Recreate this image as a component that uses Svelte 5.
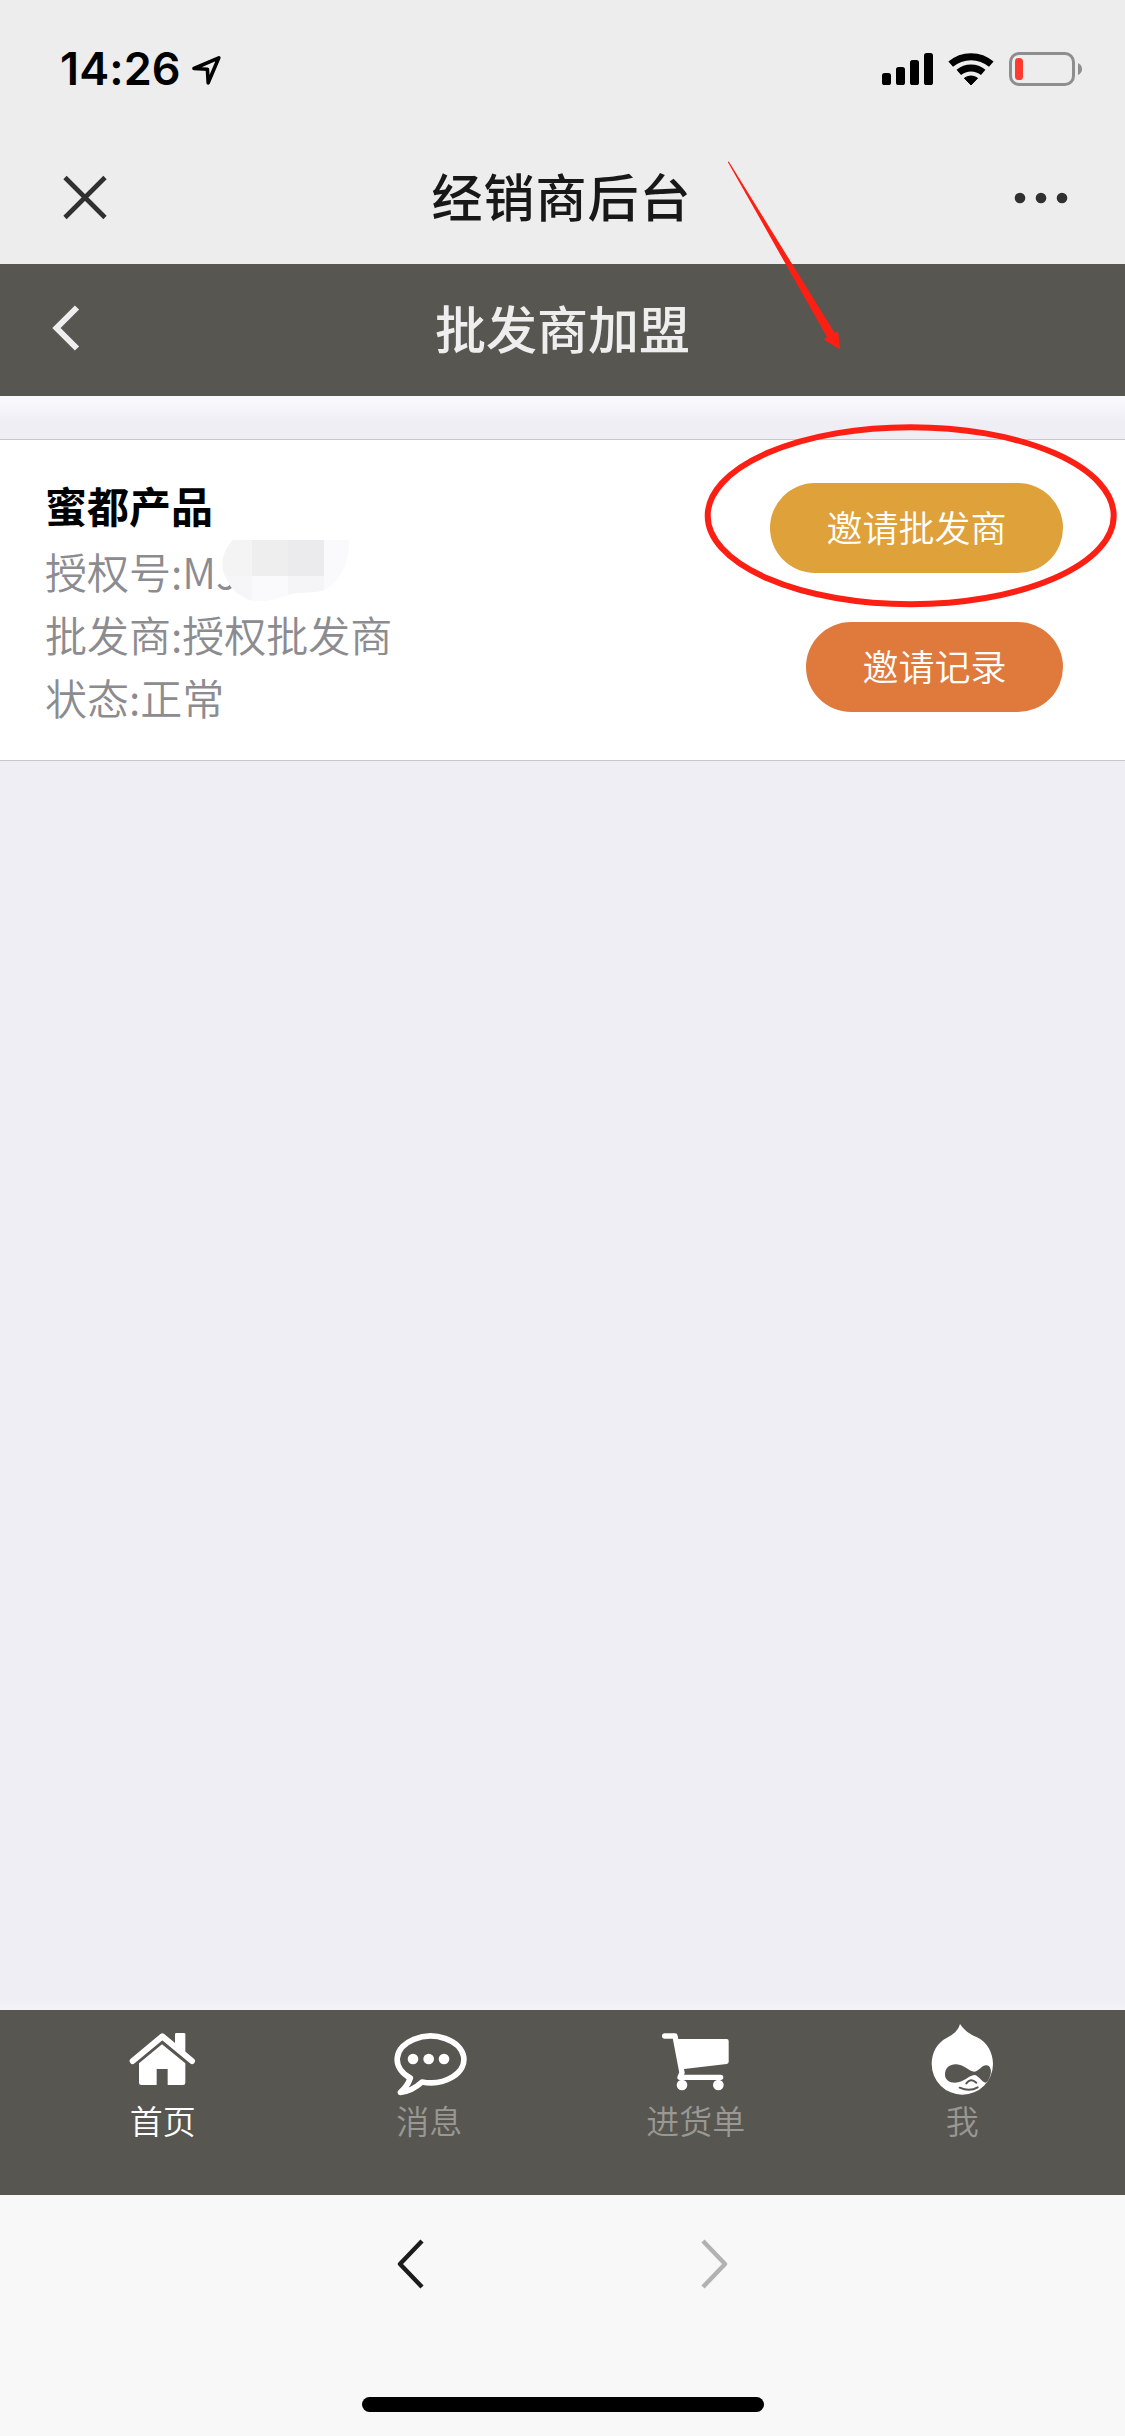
<script>
  let active = "home";

  const product = {
    name: "蜜都产品",
    code: "MJ",
    level: "授权批发商",
    status: "正常"
  };

  const tabs = [
    { id: "home", label: "首页" },
    { id: "message", label: "消息" },
    { id: "cart", label: "进货单" },
    { id: "me", label: "我" }
  ];
</script>

<div class="phone">
  <div class="status">
    <div class="clock">
      <span>14:26</span>
      <svg width="34" height="34" viewBox="0 0 34 34">
        <path d="M4 16.5L28.8 5.8L18.2 30.8L17.4 17.2Z" fill="none" stroke="#000" stroke-width="3.6" stroke-linejoin="round" />
      </svg>
    </div>
    <svg width="204" height="40" viewBox="880 49 204 40">
      <rect x="882" y="73" width="9" height="12" rx="2.6" />
      <rect x="896" y="67" width="9" height="18" rx="2.6" />
      <rect x="910" y="60" width="9" height="25" rx="2.6" />
      <rect x="924" y="53" width="9" height="32" rx="2.6" />
      <g fill="none" stroke="#000" stroke-width="7">
        <path d="M950.7 64.2A31 31 0 0 1 991.3 64.2" />
        <path d="M958.8 72.4A19 19 0 0 1 983.2 72.4" />
      </g>
      <path d="M964.4 78.2A11 11 0 0 1 977.6 78.2L971 85Z" stroke="#000" stroke-linejoin="round" />
      <rect x="1010.5" y="53.5" width="63" height="31" rx="8.5" fill="none" stroke="#8e8e8e" stroke-width="3" />
      <rect x="1015" y="58" width="8" height="22" rx="3.6" fill="#ff3b30" />
      <path d="M1078 63Q1082 65 1082 69T1078 75Z" fill="#8e8e8e" />
    </svg>
  </div>

  <header class="wechat">
    <svg width="48" height="48" viewBox="0 0 48 48">
      <path d="M4 3.5L44 43.5M44 3.5L4 43.5" stroke="#303030" stroke-width="4.6" />
    </svg>
    <h1>经销商后台</h1>
    <svg width="54" height="12" viewBox="0 0 54 12" fill="#303030">
      <circle cx="6" cy="6" r="5.3" />
      <circle cx="27" cy="6" r="5.3" />
      <circle cx="48" cy="6" r="5.3" />
    </svg>
  </header>

  <header class="bar">
    <svg width="28" height="48" viewBox="0 0 28 48">
      <path d="M25 3.5L4.5 24L25 44.5" fill="none" stroke="#eee" stroke-width="6" />
    </svg>
    <h2>批发商加盟</h2>
  </header>

  <main>
    <section class="card">
      <div class="info">
        <h3>{product.name}</h3>
        <p class="code">
          授权号:{product.code}
          <svg class="mosaic" width="130" height="64" viewBox="222 540 130 64">
            <clipPath id="smudge">
              <path d="M233 540H349C350 558 343 580 325 590C311 594 300 591 288 595C275 600 262 603 249 600C236 594 231 588 227 580C219 567 222 551 233 540Z" />
            </clipPath>
            <g clip-path="url(#smudge)">
              <rect x="216" y="540" width="136" height="64" fill="#fafafc" />
              <rect x="216" y="540" width="36" height="36" fill="#f4f4f5" />
              <rect x="252" y="540" width="36" height="36" fill="#eeeeef" />
              <rect x="288" y="540" width="36" height="36" fill="#ebebed" />
              <rect x="216" y="576" width="36" height="28" fill="#f6f6f8" />
              <rect x="288" y="576" width="36" height="28" fill="#f5f5f7" />
            </g>
          </svg>
        </p>
        <p>批发商:{product.level}</p>
        <p>状态:{product.status}</p>
      </div>
      <div class="actions">
        <button class="invite">邀请批发商</button>
        <button class="record">邀请记录</button>
      </div>
    </section>
  </main>

  <nav class="tabs">
    {#each tabs as tab}
      <div class="tab" class:active={tab.id === active}>
        <svg width="75" height="75" viewBox="0 0 225 225" fill="#fff">
          {#if tab.id === "home"}
            <path d="M23 117L112 43L201 117" fill="none" stroke="#fff" stroke-width="18" stroke-linejoin="round" stroke-linecap="round" />
            <path d="M154 33H177Q181 33 181 37V100L150 74V37Q150 33 154 33Z" />
            <path d="M111 67L181 124V182Q181 189 174 189H128V141H95V189H49Q42 189 42 182V124Z" />
          {:else if tab.id === "message"}
            <g transform="translate(-2 0)">
              <path d="M57 168A100 70 0 1 1 92 180Q62 208 27 211Q48 194 57 168Z" fill="none" stroke="#fff" stroke-width="17" stroke-linejoin="round" />
              <circle cx="65" cy="111" r="16" />
              <circle cx="112" cy="111" r="16" />
              <circle cx="158" cy="111" r="16" />
            </g>
          {:else if tab.id === "cart"}
            <path d="M20 42H51L72 152L66 166H188" fill="none" stroke="#fff" stroke-width="16" stroke-linejoin="round" stroke-linecap="round" />
            <path d="M54 51H206Q212 51 212 57V119Q212 125 206 126L72 142Z" />
            <circle cx="72" cy="189" r="16" />
            <circle cx="181" cy="189" r="16" />
          {:else}
            <path d="M105 6Q98 32 66 47C36 62 20 92 20 126A92 92 0 0 0 204 126C204 92 186 60 156 46C128 34 116 22 105 6Z" />
            <path d="M60 158C60 136 76 126 94 127C118 128 132 149 148 149C162 149 168 130 184 130C198 130 200 150 196 160C192 172 188 181 182 182C172 182 160 159 148 159C132 160 116 182 90 182C72 182 60 172 60 158Z" fill="#575651" />
            <path d="M124 184Q137 167 154 182M104 197Q134 210 158 196" fill="none" stroke="#575651" stroke-width="6" stroke-linecap="round" />
          {/if}
        </svg>
        <span>{tab.label}</span>
      </div>
    {/each}
  </nav>

  <footer>
    <div class="history">
      <svg width="30" height="54" viewBox="0 0 30 54">
        <path d="M26 4L4 27L26 50" fill="none" stroke="#1c1c1c" stroke-width="4.4" stroke-linejoin="round" />
      </svg>
      <svg width="30" height="54" viewBox="0 0 30 54">
        <path d="M3 4L25 27L3 50" fill="none" stroke="#b2b2b2" stroke-width="4.4" stroke-linejoin="round" />
      </svg>
    </div>
    <div class="home-bar"></div>
  </footer>

  <!-- hand-drawn marks over the invite button -->
  <svg class="marks" width="1125" height="640" viewBox="0 0 1125 640">
    <path d="M727.8 162L728.8 161.6L834.8 333L838 331L840 349.5L823.5 339.5L827 337Z" fill="#fc2014" />
    <ellipse cx="910.7" cy="515.7" rx="203" ry="88.5" fill="none" stroke="#fc2014" stroke-width="6" />
  </svg>
</div>

<style>
  :global(body) {
    margin: 0;
  }
  .phone {
    position: relative;
    display: flex;
    flex-direction: column;
    width: 1125px;
    height: 2436px;
    overflow: hidden;
    background: #efeff4;
    font-family: "Noto Sans CJK SC", sans-serif;
  }
  svg {
    display: block;
    flex: none;
  }
  h1, h2, h3, p {
    margin: 0;
  }

  .status {
    display: flex;
    justify-content: space-between;
    box-sizing: border-box;
    height: 132px;
    padding: 49px 41px 0 60px;
    background: #ededed;
  }
  .clock {
    display: flex;
    gap: 9px;
    height: 40px;
    align-items: center;
    font: 600 45px/40px Inter, sans-serif;
    letter-spacing: 0.1px;
  }

  .wechat {
    display: grid;
    grid-template-columns: 120px 1fr 120px;
    align-items: center;
    box-sizing: border-box;
    height: 132px;
    padding: 0 57px 0 61px;
    background: #ededed;
  }
  .wechat svg:last-child {
    justify-self: end;
  }
  h1 {
    padding: 0 6px 7px 0;
    text-align: center;
    font-size: 51px;
    line-height: 76px;
    font-weight: 500;
    letter-spacing: 1px;
    color: #181818;
  }

  .bar {
    display: grid;
    grid-template-columns: 120px 1fr 120px;
    align-items: center;
    box-sizing: border-box;
    height: 132px;
    padding: 0 52px 4px;
    background: #575651;
  }
  h2 {
    padding-bottom: 2px;
    text-align: center;
    font-size: 51px;
    line-height: 76px;
    font-weight: 500;
    color: #eee;
  }

  main {
    flex: 1;
    padding-top: 43px;
    background: linear-gradient(#fbfaff, #efeef4 26px, #efeef4 calc(100% - 10px), #f4f3f8);
  }
  .card {
    display: flex;
    justify-content: space-between;
    box-sizing: border-box;
    height: 322px;
    padding: 32px 62px 0 45px;
    background: #fff;
    border-top: 1px solid #c8c7cc;
    border-bottom: 1px solid #c8c7cc;
  }
  h3 {
    margin-bottom: 1px;
    font-size: 42px;
    line-height: 66px;
    font-weight: 700;
    color: #000;
  }
  p {
    font-size: 42px;
    line-height: 63px;
    font-weight: 350;
    color: #8c8c90;
  }
  .code {
    position: relative;
  }
  .mosaic {
    position: absolute;
    left: 177px;
    top: 1px;
  }
  .actions {
    display: flex;
    flex-direction: column;
    align-items: flex-end;
    gap: 49px;
    padding-top: 11px;
  }
  button {
    height: 90px;
    padding: 0 56.5px 5px;
    border: 0;
    border-radius: 45px;
    font-family: inherit;
    font-size: 36px;
    font-weight: 350;
    color: #fff;
  }
  .invite {
    background: #dfa13a;
  }
  .record {
    background: #e0793c;
  }

  .tabs {
    display: grid;
    grid-template-columns: repeat(4, 1fr);
    box-sizing: border-box;
    height: 185px;
    padding: 12px 29.5px 0;
    background: #575651;
  }
  .tab {
    display: flex;
    flex-direction: column;
    align-items: center;
    font-size: 33px;
    line-height: 46px;
    font-weight: 350;
    color: #999893;
  }
  .tab.active {
    color: #fff;
  }

  footer {
    display: flex;
    flex-direction: column;
    align-items: center;
    justify-content: space-between;
    box-sizing: border-box;
    height: 241px;
    padding: 42px 0 24px;
    background: #f8f8f8;
  }
  .history {
    display: flex;
    gap: 274px;
  }
  .home-bar {
    width: 402px;
    height: 15px;
    border-radius: 8px;
    background: #000;
  }

  .marks {
    position: absolute;
    left: 0;
    top: 0;
    pointer-events: none;
  }
</style>
